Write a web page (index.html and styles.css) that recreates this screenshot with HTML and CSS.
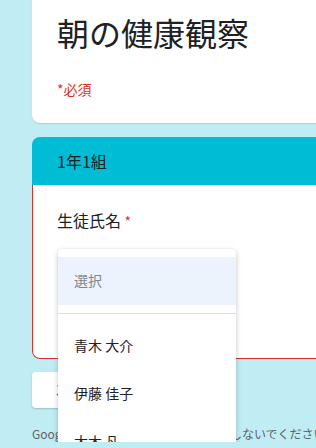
FILE: index.html
```html
<!DOCTYPE html>
<html>

<head>
    <meta charset="utf-8">
    <link rel="stylesheet" href="styles.css">
</head>

<body>
    <div class="form">
        <div class="titleCard">
            <h1 class="formTitle">朝の健康観察</h1>
            <div class="required">*必須</div>
        </div>

        <div class="section">
            <div class="sectionHead">1年1組</div>
            <div class="question">
                <div class="qLabel">生徒氏名 <span class="star">*</span></div>
                <div class="selectBox">選択</div>

                <div class="menu">
                    <div class="opt optSel">選択</div>
                    <div class="menuLine"></div>
                    <div class="opt">青木 大介</div>
                    <div class="opt">伊藤 佳子</div>
                    <div class="opt">大木 凡</div>
                </div>
            </div>
        </div>

        <button class="nextBtn">次へ</button>
        <div class="footNote">Google フォームでパスワードを送信しないでください。</div>
    </div>
</body>

</html>
```

FILE: styles.css
```css
body {
    margin: 0;
    background: #bfedf3;
    font-family: "Noto Sans CJK JP", Roboto, sans-serif;
    color: #202124;
    overflow: hidden;
}

.form {
    width: 420px;
    padding-left: 32px;
}

.titleCard {
    margin-top: -24px;
    background: white;
    border-radius: 8px;
    padding: 36px 24px 24px 25px;
    box-shadow: 0 1px 1px rgba(0, 0, 0, 0.12);
}

.formTitle {
    margin: 0;
    font-size: 32px;
    line-height: 40px;
    font-weight: 400;
}

.required {
    margin-top: 27px;
    font-size: 14px;
    line-height: 20px;
    color: #d93025;
}

.section {
    margin-top: 14px;
}

.sectionHead {
    background: #00bcd4;
    border-radius: 8px 8px 0 0;
    padding: 12px 25px;
    font-size: 16px;
    line-height: 24px;
}

.question {
    position: relative;
    background: white;
    border: 1px solid #d93025;
    border-top: none;
    border-radius: 0 0 8px 8px;
    padding: 23px 24px 52px;
}

.qLabel {
    font-size: 16px;
    line-height: 24px;
}

.star {
    color: #d93025;
    font-size: 14px;
}

.selectBox {
    margin-top: 25px;
    width: 160px;
    height: 48px;
    line-height: 48px;
    padding-left: 16px;
    font-size: 14px;
    color: #5f6368;
}

.menu {
    position: absolute;
    left: 25px;
    top: 64px;
    width: 178px;
    padding: 8px 0;
    background: white;
    border-radius: 4px;
    box-shadow: 0 2px 6px rgba(0, 0, 0, 0.18), 0 0 2px rgba(0, 0, 0, 0.08);
    z-index: 2;
}

.opt {
    height: 48px;
    line-height: 46px;
    padding-left: 16px;
    font-size: 14px;
}

.optSel {
    background: #edf3fd;
    color: #80868b;
}

.menuLine {
    margin: 8px 0;
    border-top: 1px solid #dadce0;
}

.nextBtn {
    display: block;
    margin-top: 13px;
    height: 36px;
    padding: 0 24px;
    border: none;
    border-radius: 4px;
    background: white;
    box-shadow: 0 1px 2px rgba(0, 0, 0, 0.2);
    font-family: inherit;
    font-size: 14px;
    color: #00838f;
}

.footNote {
    margin-top: 18px;
    font-size: 12px;
    line-height: 16px;
    color: #5f6368;
    white-space: nowrap;
}
```
